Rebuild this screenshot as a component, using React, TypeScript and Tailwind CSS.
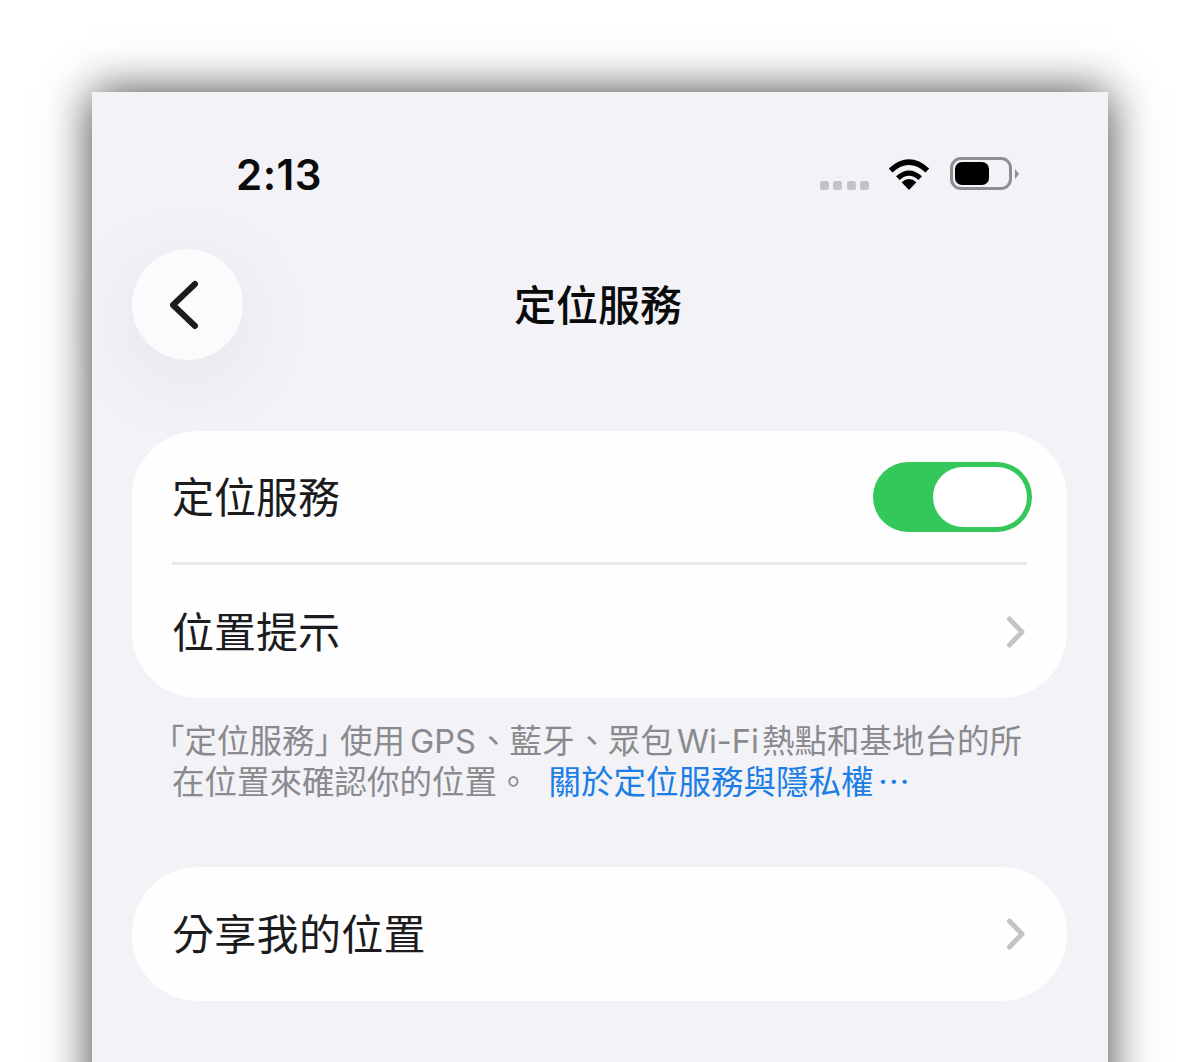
import * as React from 'react';

const CJK = "font-['Inter','Noto_Sans_CJK_TC',sans-serif]";

function Chevron() {
  return (
    <svg width="22" height="34" viewBox="0 0 22 34" fill="none" className="mr-[-1px]">
      <path d="M3.5 4 L16 17 L3.5 30" stroke="#c4c4c6" strokeWidth="5" strokeLinecap="round" strokeLinejoin="round" />
    </svg>
  );
}

function StatusIcons() {
  return (
    <div className="flex items-center">
      <div className="flex gap-[4.5px] mt-[21px] mr-[18px]">
        {[0, 1, 2, 3].map(i => (
          <div key={i} className="w-[9px] h-[9px] rounded-[2.5px] bg-[#c4c4c6]" />
        ))}
      </div>
      <svg width="44" height="34" viewBox="0 0 44 34" className="mr-[19px] mt-[-2px]">
        <path d="M22 33 L14.6 25.2 Q22 19 29.4 25.2 Z" fill="#000" />
        <path d="M10.8 21.2 Q22 11 33.2 21.2" fill="none" stroke="#000" strokeWidth="5.2" />
        <path d="M3.6 13.4 Q22 -3.2 40.4 13.4" fill="none" stroke="#000" strokeWidth="5.4" />
      </svg>
      <div className="w-[62px] h-[33px] rounded-[11px] border-[3px] border-[#8e8e90] p-[2px] flex mt-[-2px]">
        <div className="w-[34px] h-full rounded-[7px] bg-black" />
      </div>
      <div className="w-0 h-0 ml-[3px] mt-[-2px] border-y-[5px] border-y-transparent border-l-[4px] border-l-[#8e8e90]" />
    </div>
  );
}

export default function App() {
  return (
    <div className={`h-[1062px] w-[1200px] overflow-hidden bg-white pt-[92px] px-[92px] ${CJK}`}>
      <div className="h-[1100px] bg-[#f2f2f7] shadow-[0_0_44px_rgba(0,0,0,0.75)] pl-10 pr-[41px]">
        <div className="flex justify-between items-center pt-[58px] pl-[104px] pr-[48px] h-[107px]">
          <div className="text-[42px] leading-[50px] font-semibold text-[#0b0b0c] tracking-[0.5px]">2:13</div>
          <StatusIcons />
        </div>

        <div className="relative flex items-center justify-center mt-[50px] h-[111px] pr-[3px]">
          <div className="absolute left-0 top-0 w-[111px] h-[111px] rounded-full bg-[#fbfbfd] flex items-center justify-center shadow-[0_18px_90px_rgba(0,0,0,0.07)]">
            <svg width="32" height="50" viewBox="0 0 32 50" fill="none" className="mr-[8px]">
              <path d="M27 4 L5 25 L27 46" stroke="#1c1c1e" strokeWidth="6" strokeLinecap="round" strokeLinejoin="round" />
            </svg>
          </div>
          <div className="text-[42px] leading-[50px] font-medium text-[#0b0b0c] mt-[2px]">定位服務</div>
        </div>

        <div className="mt-[71px] rounded-[66px] bg-[#fefefe]">
          <div className="flex items-center justify-between h-[131px] pl-10 pr-[35px]">
            <span className="text-[42px] leading-[50px] text-[#1c1c1e] mt-[3px]">定位服務</span>
            <div className="w-[159px] h-[70px] rounded-full bg-[#34c759] p-[5px] flex justify-end mt-[1px]">
              <div className="w-[94px] h-[60px] rounded-full bg-white" />
            </div>
          </div>
          <div className="mx-10 h-[3px] bg-[#e9e9eb]" />
          <div className="flex items-center justify-between h-[133px] pl-10 pr-10">
            <span className="text-[42px] leading-[50px] text-[#1c1c1e] mt-[2px]">位置提示</span>
            <Chevron />
          </div>
        </div>

        <p className="mt-[23px] ml-10 whitespace-nowrap text-[32.5px] leading-[41px] text-[#8a8a8e]">
          <span className="ml-[-20px]">「</span>定位服務<span className="tracking-[-7px]">」</span>使用<span className="ml-[5px] mr-[1px]">GPS</span>、藍牙<span className="ml-[1px]">、</span>眾包<span className="ml-[4px] mr-[3px]">Wi-Fi</span>熱點和基地台的所
          <br />
          在位置來確認你的位置。
          <span className="ml-[19px] text-[#1a7ee6]">關於定位服務與隱私權<span className="ml-[4px]">⋯</span></span>
        </p>

        <div className="mt-[64px] flex items-center justify-between h-[134px] rounded-[66px] bg-[#fefefe] pl-10 pr-10">
          <span className="text-[42px] leading-[50px] text-[#1c1c1e] tracking-[0.3px] mt-[2px]">分享我的位置</span>
          <Chevron />
        </div>
      </div>
    </div>
  );
}
